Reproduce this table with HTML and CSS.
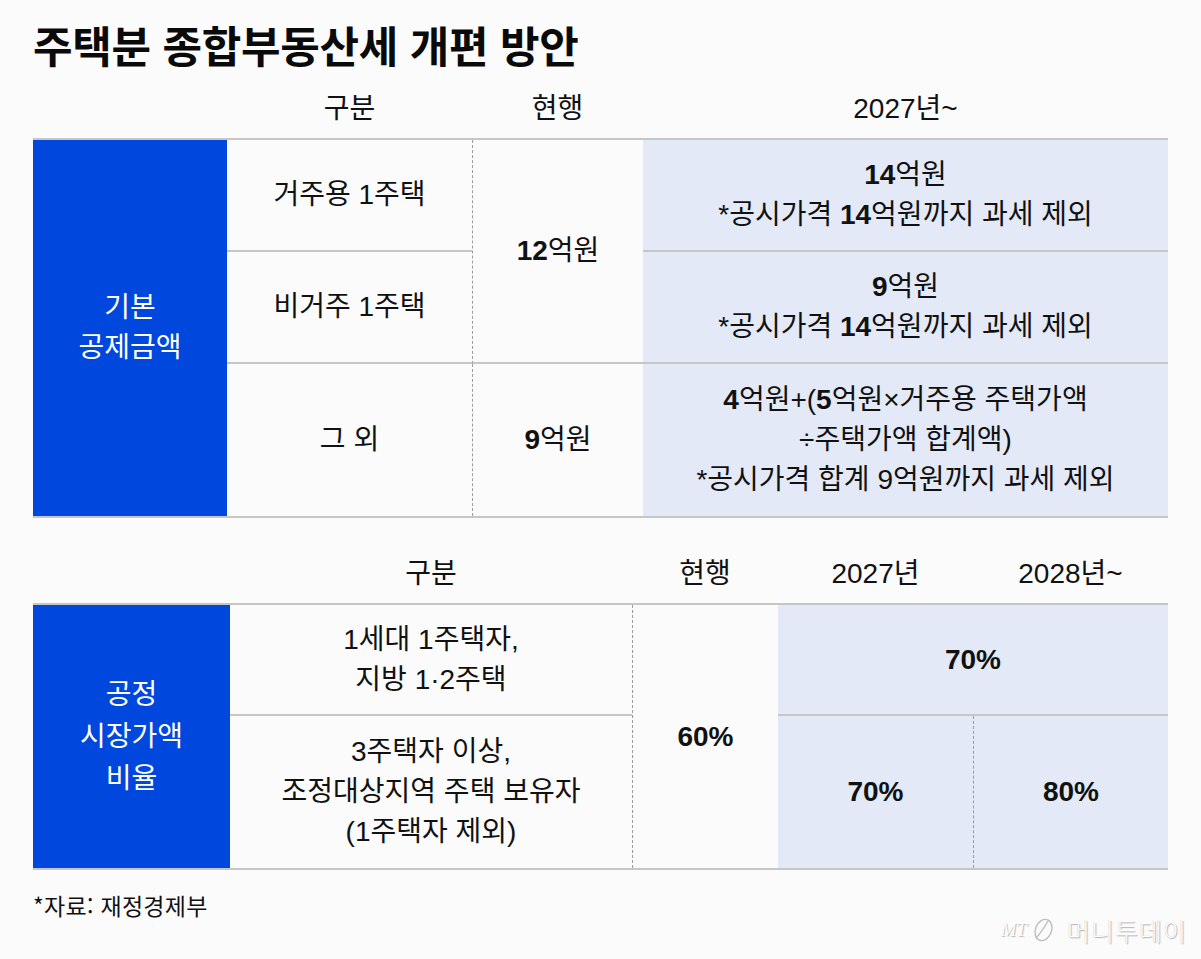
FILE: index.html
```html
<!DOCTYPE html>
<html lang="ko">
<head>
<meta charset="utf-8">
<title>주택분 종합부동산세 개편 방안</title>
<link rel="stylesheet" href="styles.css">
</head>
<body>
<div class="page">
  <h1 class="title">주택분 종합부동산세 개편 방안</h1>

  <div class="thead t1">
    <div></div>
    <div>구분</div>
    <div>현행</div>
    <div>2027년~</div>
  </div>
  <div class="table t1">
    <div class="cell side span3">기본<br>공제금액</div>
    <div class="cell line">거주용 1주택</div>
    <div class="cell dash line span2"><span><b>12</b>억원</span></div>
    <div class="cell light line"><span><b>14</b>억원<br>*공시가격 <b>14</b>억원까지 과세 제외</span></div>
    <div class="cell line">비거주 1주택</div>
    <div class="cell light line"><span><b>9</b>억원<br>*공시가격 <b>14</b>억원까지 과세 제외</span></div>
    <div class="cell">그 외</div>
    <div class="cell dash"><span><b>9</b>억원</span></div>
    <div class="cell light"><span><b>4</b>억원+(<b>5</b>억원×거주용 주택가액<br>÷주택가액 합계액)<br>*공시가격 합계 9억원까지 과세 제외</span></div>
  </div>

  <div class="thead t2">
    <div></div>
    <div>구분</div>
    <div>현행</div>
    <div>2027년</div>
    <div>2028년~</div>
  </div>
  <div class="table t2">
    <div class="cell side side2 span2">공정<br>시장가액<br>비율</div>
    <div class="cell line"><span>1세대 1주택자,<br>지방 1·2주택</span></div>
    <div class="cell dash span2"><b>60%</b></div>
    <div class="cell light line wide"><b>70%</b></div>
    <div class="cell"><span>3주택자 이상,<br>조정대상지역 주택 보유자<br>(1주택자 제외)</span></div>
    <div class="cell light"><b>70%</b></div>
    <div class="cell light dash"><b>80%</b></div>
  </div>

  <div class="footer">
    <p class="source">*자료: 재정경제부</p>
    <div class="logo">
      <span class="mt">MT</span>
      <svg class="mark" width="24" height="26" viewBox="0 0 24 26" aria-hidden="true">
        <ellipse cx="12.5" cy="13" rx="8" ry="11" transform="rotate(22 12.5 13)" fill="none" stroke="#bdbdbd" stroke-width="1.4"/>
        <path d="M5 21 C9 17 13 11 17 4" fill="none" stroke="#bdbdbd" stroke-width="1.4"/>
      </svg>
      <span class="mn">머니투데이</span>
    </div>
  </div>
</div>
</body>
</html>
```

FILE: styles.css
```css
* { box-sizing: border-box; }

html, body {
  margin: 0;
  padding: 0;
  background: #fbfbfb;
}

body {
  font-family: "Liberation Sans", "Noto Sans CJK KR", sans-serif;
  color: #111;
}

.page {
  width: 1201px;
  height: 959px;
  padding-left: 33px;
  overflow: hidden;
}

.title {
  margin: 0;
  height: 80px;
  padding-top: 18px;
  font-family: "Noto Sans CJK KR", sans-serif;
  font-size: 43px;
  line-height: 52px;
  font-weight: 700;
  letter-spacing: -0.3px;
  color: #0a0a0a;
}

.thead {
  display: grid;
  width: 1135px;
  height: 58px;
  align-items: center;
  font-size: 28px;
  line-height: 40px;
  text-align: center;
}

.t1 { grid-template-columns: 194px 245px 171px 525px; }
.t2 { grid-template-columns: 197px 402px 146px 195px 195px; }

.thead.t2 { margin-top: 27px; }

.table {
  display: grid;
  width: 1135px;
  border-top: 2px solid #c6c6c6;
  border-bottom: 2px solid #c6c6c6;
}

.table.t1 { grid-template-rows: 112px 112px 152px; }
.table.t2 { grid-template-rows: 111px 152px; }

.cell {
  display: flex;
  align-items: center;
  justify-content: center;
  text-align: center;
  font-size: 28px;
  line-height: 40px;
  white-space: nowrap;
}

.cell b { font-weight: 700; }

.span2 { grid-row: span 2; }
.span3 { grid-row: span 3; }
.wide { grid-column: span 2; }

.side {
  background: #0047de;
  color: #fff;
}

.side2 { line-height: 42px; }

.line { border-bottom: 2px solid #c6c6c6; }

.dash { border-left: 1px dashed #9c9c9c; }

.light { background: #e3e9f7; }

.footer {
  display: flex;
  justify-content: space-between;
  align-items: flex-start;
  width: 1154px;
  height: 82px;
}

.source {
  margin: 0;
  padding-top: 20px;
  font-family: "Noto Sans CJK KR", sans-serif;
  font-size: 23px;
  line-height: 30px;
  letter-spacing: 0.3px;
  color: #111;
}

.logo {
  align-self: flex-end;
  display: flex;
  align-items: center;
  height: 30px;
  margin-bottom: 7px;
}

.mt {
  font-family: "Liberation Serif", serif;
  font-style: italic;
  font-size: 19px;
  color: #fdfdfd;
  text-shadow: 1px 1px 1px #b4b4b4;
  letter-spacing: -0.5px;
  margin-right: 5px;
}

.mark { margin-right: 12px; }

.mn {
  font-family: "Noto Sans CJK KR", sans-serif;
  font-weight: 300;
  font-size: 25px;
  line-height: 30px;
  color: #fdfdfd;
  text-shadow: 1px 1px 1px #b0b0b0, -0.5px -0.5px 0 #d8d8d8;
  letter-spacing: 1px;
}
```
